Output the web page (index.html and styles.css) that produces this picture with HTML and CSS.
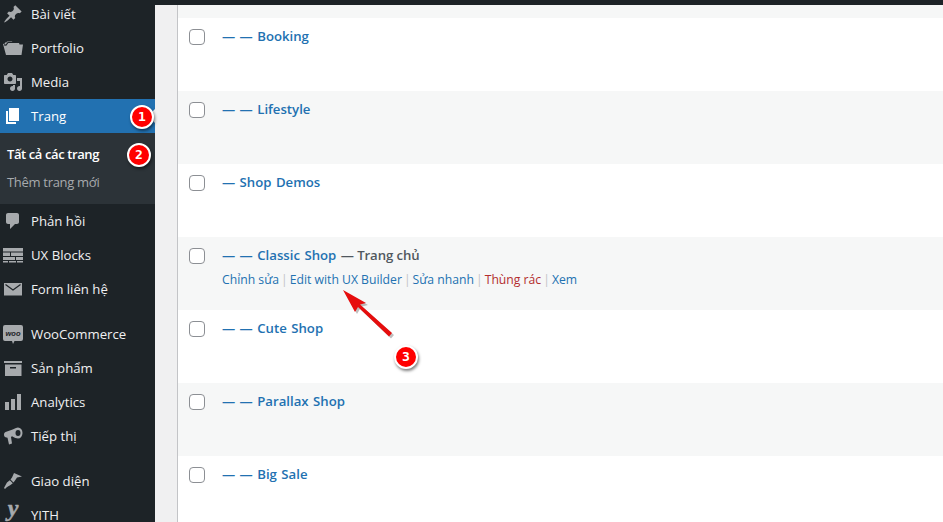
FILE: index.html
```html
<!DOCTYPE html>
<html lang="vi">
<head>
<meta charset="utf-8">
<title>Trang</title>
<link rel="stylesheet" href="styles.css">
</head>
<body>
<div class="topbar"></div>
<div class="layout">
  <nav class="sidebar">
    <a class="item"><svg class="ico" viewBox="0 0 20 20"><path d="M10.440 3.020l1.820-1.820 6.360 6.350-1.830 1.820c-1.050-.68-2.480-.57-3.410.36l-.75.75c-.92.93-1.040 2.350-.35 3.410l-1.830 1.820-2.410-2.410-2.800 2.790c-.42.42-3.380 2.710-3.800 2.290s1.860-3.390 2.280-3.810l2.790-2.790L4.100 9.360l1.830-1.820c1.050.69 2.480.57 3.400-.36l.75-.75c.93-.92 1.050-2.350.36-3.410z"/></svg><span>Bài viết</span></a>
    <a class="item"><svg class="ico" viewBox="0 0 20 20"><path d="M0 6l2-.5V4.500h1.500l.5-1h5l1 1.500h6l.5 1.500H20L18.500 17H3z"/><path class="cut" d="M1 6.800l2 .2 2-2.500h5"/></svg><span>Portfolio</span></a>
    <a class="item"><svg class="ico" viewBox="0 0 20 20"><path d="M13 11V4c0-.55-.45-1-1-1h-1.670L9 1H5L3.670 3H2c-.55 0-1 .45-1 1v7c0 .55.45 1 1 1h10c.55 0 1-.45 1-1zM7 4.500c1.380 0 2.500 1.120 2.500 2.500S8.380 9.500 7 9.500 4.500 8.380 4.500 7 5.620 4.500 7 4.500zM14 6h5v10.500c0 1.380-1.120 2.500-2.500 2.500S14 17.880 14 16.500s1.120-2.500 2.500-2.500c.17 0 .34.020.5.050V9h-3V6zm-4 8.050V13h2v3.500c0 1.380-1.120 2.500-2.500 2.500S7 17.880 7 16.500 8.120 14 9.500 14c.17 0 .34.020.5.050z"/></svg><span>Media</span></a>
    <a class="item current"><svg class="ico" viewBox="0 0 20 20"><path d="M6 15V2h10v13H6zm-1 1h8v2H3V5h2v11z"/></svg><span>Trang</span></a>
    <div class="sub">
      <a class="sub-item active">Tất cả các trang</a>
      <a class="sub-item">Thêm trang mới</a>
    </div>
    <a class="item"><svg class="ico" viewBox="0 0 20 20"><path d="M5 2h9c1.100 0 2 .9 2 2v7c0 1.100-.9 2-2 2h-2l-5 5v-5H5c-1.100 0-2-.9-2-2V4c0-1.100.9-2 2-2z"/></svg><span>Phản hồi</span></a>
    <a class="item"><svg class="ico" viewBox="0 0 20 20"><path d="M0 3h20v3.500H0zM0 7.500h7V11H0zM8 7.500h12V11H8zM0 12h12v3H0zM13 12h7v3h-7zM0 16h5v1.500H0zM6 16h7v1.500H6zM14 16h6v1.500h-6z"/></svg><span>UX Blocks</span></a>
    <a class="item"><svg class="ico" viewBox="0 0 20 20"><path d="M1 4h18v12.500H1z"/><path class="cut" d="M2.500 5.500L10 11l7.500-5.500"/></svg><span>Form liên hệ</span></a>
    <div class="sep"></div>
    <a class="item"><svg class="ico" viewBox="0 0 20 20"><path d="M2 1h16a2 2 0 012 2v12a2 2 0 01-2 2h-6.500L10 20l-1-3H2a2 2 0 01-2-2V3a2 2 0 012-2z"/><text class="woo" x="10" y="11.500" text-anchor="middle">woo</text></svg><span>WooCommerce</span></a>
    <a class="item"><svg class="ico" viewBox="0 0 20 20"><path fill-rule="evenodd" d="M1 3h18v2H1zM2 6.500h16.500V18H2zM7 9v1.500h6V9z"/></svg><span>Sản phẩm</span></a>
    <a class="item"><svg class="ico" viewBox="0 0 20 20"><path d="M18 18V2h-4v16h4zm-6 0V7H8v11h4zm-6 0v-8H2v8h4z"/></svg><span>Analytics</span></a>
    <a class="item"><svg class="ico" viewBox="0 0 20 20"><path fill-rule="evenodd" d="M15 1.500a4.500 5.500 0 010 11c-1.500 0-3.500-1-6-2.300L8 11l1 6.500-3 1-1.500-6.800-2-.5A2.500 2.500 0 011 8.500 2.500 2.500 0 012.500 6L9 3.800c2.500-1.300 4.500-2.300 6-2.300zm0 2.500a2.500 3 0 100 6 2.500 3 0 000-6z"/></svg><span>Tiếp thị</span></a>
    <div class="sep"></div>
    <a class="item"><svg class="ico" viewBox="0 0 20 20"><path d="M11 2l8 3.500-5 1-2 3-1.500 2L7.500 8.500l1.500-2zM6.800 9.300L9.800 12.200 7.500 14c-1.500 1.200-3.500 1.500-5.500 4l-1-1c1.500-3 2.500-4.500 3-5.500z"/></svg><span>Giao diện</span></a>
    <a class="item"><svg class="ico" viewBox="0 0 20 20"><text class="yith" x="10" y="11" text-anchor="middle">y</text></svg><span>YITH</span></a>
  </nav>
  <div class="gutter"></div>
  <main class="table">
    <div class="strip"></div>
    <div class="row"><input class="check" type="checkbox"><div class="cell"><div class="title"><a>— — Booking</a></div></div></div>
    <div class="row alt"><input class="check" type="checkbox"><div class="cell"><div class="title"><a>— — Lifestyle</a></div></div></div>
    <div class="row"><input class="check" type="checkbox"><div class="cell"><div class="title"><a>— Shop Demos</a></div></div></div>
    <div class="row alt"><input class="check" type="checkbox"><div class="cell"><div class="title"><a>— — Classic Shop</a> <span class="state">— Trang chủ</span></div>
      <div class="actions"><a>Chỉnh sửa</a><i>|</i><a>Edit with UX Builder</a><i>|</i><a>Sửa nhanh</a><i>|</i><a class="trash">Thùng rác</a><i>|</i><a>Xem</a></div></div></div>
    <div class="row"><input class="check" type="checkbox"><div class="cell"><div class="title"><a>— — Cute Shop</a></div></div></div>
    <div class="row alt"><input class="check" type="checkbox"><div class="cell"><div class="title"><a>— — Parallax Shop</a></div></div></div>
    <div class="row"><input class="check" type="checkbox"><div class="cell"><div class="title"><a>— — Big Sale</a></div></div></div>
  </main>
</div>
<div class="badge b1">1</div>
<div class="badge b2">2</div>
<div class="badge b3">3</div>
<svg class="arrow" viewBox="0 0 70 70" width="70" height="70">
  <path class="arrow-shadow" d="M4 5l23 13-6 1.500L53 48 50 51.500 19 22l-3 5z"/>
  <path class="arrow-head" d="M2 3l23 13-6 1.500L51 46 48 49.500 17 20l-3 5z"/>
</svg>
</body>
</html>
```
FILE: styles.css
```css
* { box-sizing: border-box; }
html, body { margin: 0; height: 522px; overflow: hidden; }
body { font-family: "Open Sans", "Noto Sans", sans-serif; font-size: 13px; background: #f0f0f1; position: relative; }
.topbar { height: 5px; background: #1d2327; }
.layout { display: flex; height: 517px; overflow: hidden; }
.sidebar { width: 155px; flex: none; background: #1d2327; color: #f0f0f1; margin-top: -8px; }
.item { display: flex; align-items: center; height: 34px; padding-left: 3px; position: relative; }
.item span { margin-left: 8px; white-space: nowrap; line-height: 14px; font-size: 13.2px; }
.ico { width: 20px; height: 20px; flex: none; fill: #a7aaad; overflow: visible; }
.cut { stroke: #1d2327; stroke-width: 1.2; fill: none; }
.woo { font-size: 7.5px; font-weight: 700; font-style: italic; fill: #1d2327; font-family: "Liberation Sans", sans-serif; }
.yith { font-size: 24px; font-weight: 700; font-style: italic; font-family: "Liberation Serif", serif; stroke: #a7aaad; stroke-width: .5; }
.current { background: #2271b1; color: #fff; }
.current .ico { fill: #fff; }
.current::after { content: ""; position: absolute; right: 0; top: 10px; border: 7px solid transparent; border-right-color: #f0f0f1; border-left-width: 0; }
.sub { background: #2c3338; padding: 7px 0 8px; }
.sub-item { display: block; height: 28px; line-height: 28px; padding-left: 7px; color: #a7aaad; letter-spacing: -.3px; }
.sub-item.active { color: #fff; font-weight: 600; letter-spacing: -.4px; }
.sep { height: 11px; }
.gutter { flex: none; background: #f0f0f1; border-right: 1px solid #c3c4c7; width: 23px; }
.table { flex: 1; min-width: 0; background: #fff; }
.strip { height: 13px; background: #f6f7f7; }
.row { display: flex; height: 73px; background: #fff; padding: 11px 0 0 11px; }
.row.alt { background: #f6f7f7; }
.check { appearance: none; width: 16px; height: 16px; margin: 0; border: 1px solid #8c8f94; border-radius: 4px; background: #fff; flex: none; }
.cell { margin-left: 17px; }
.title { font-size: 13.2px; line-height: 14px; font-weight: 600; color: #50575e; white-space: nowrap; word-spacing: 1px; }
.title a { color: #2271b1; }
.state { word-spacing: 0; letter-spacing: -.1px; }
.actions { margin-top: 9px; font-size: 12.2px; line-height: 18px; color: #2271b1; white-space: nowrap; }
.actions i { font-style: normal; color: #c3c4c7; margin: 0 2px; }
.trash { color: #b32d2e; }
.badge { position: absolute; width: 24px; height: 24px; border-radius: 50%; background: #f00; border: 2px solid #fff; color: #fff; font: 700 13px/20px "DejaVu Sans Mono", monospace; text-align: center; box-shadow: 1px 2px 3px rgba(0,0,0,.5); }
.b1 { left: 130px; top: 105px; }
.b2 { left: 127px; top: 143px; }
.b3 { left: 394px; top: 345px; }
.arrow { position: absolute; left: 341px; top: 287px; }
.arrow-head { fill: #e60d0d; }
.arrow-shadow { fill: rgba(0,0,0,.25); }
```
